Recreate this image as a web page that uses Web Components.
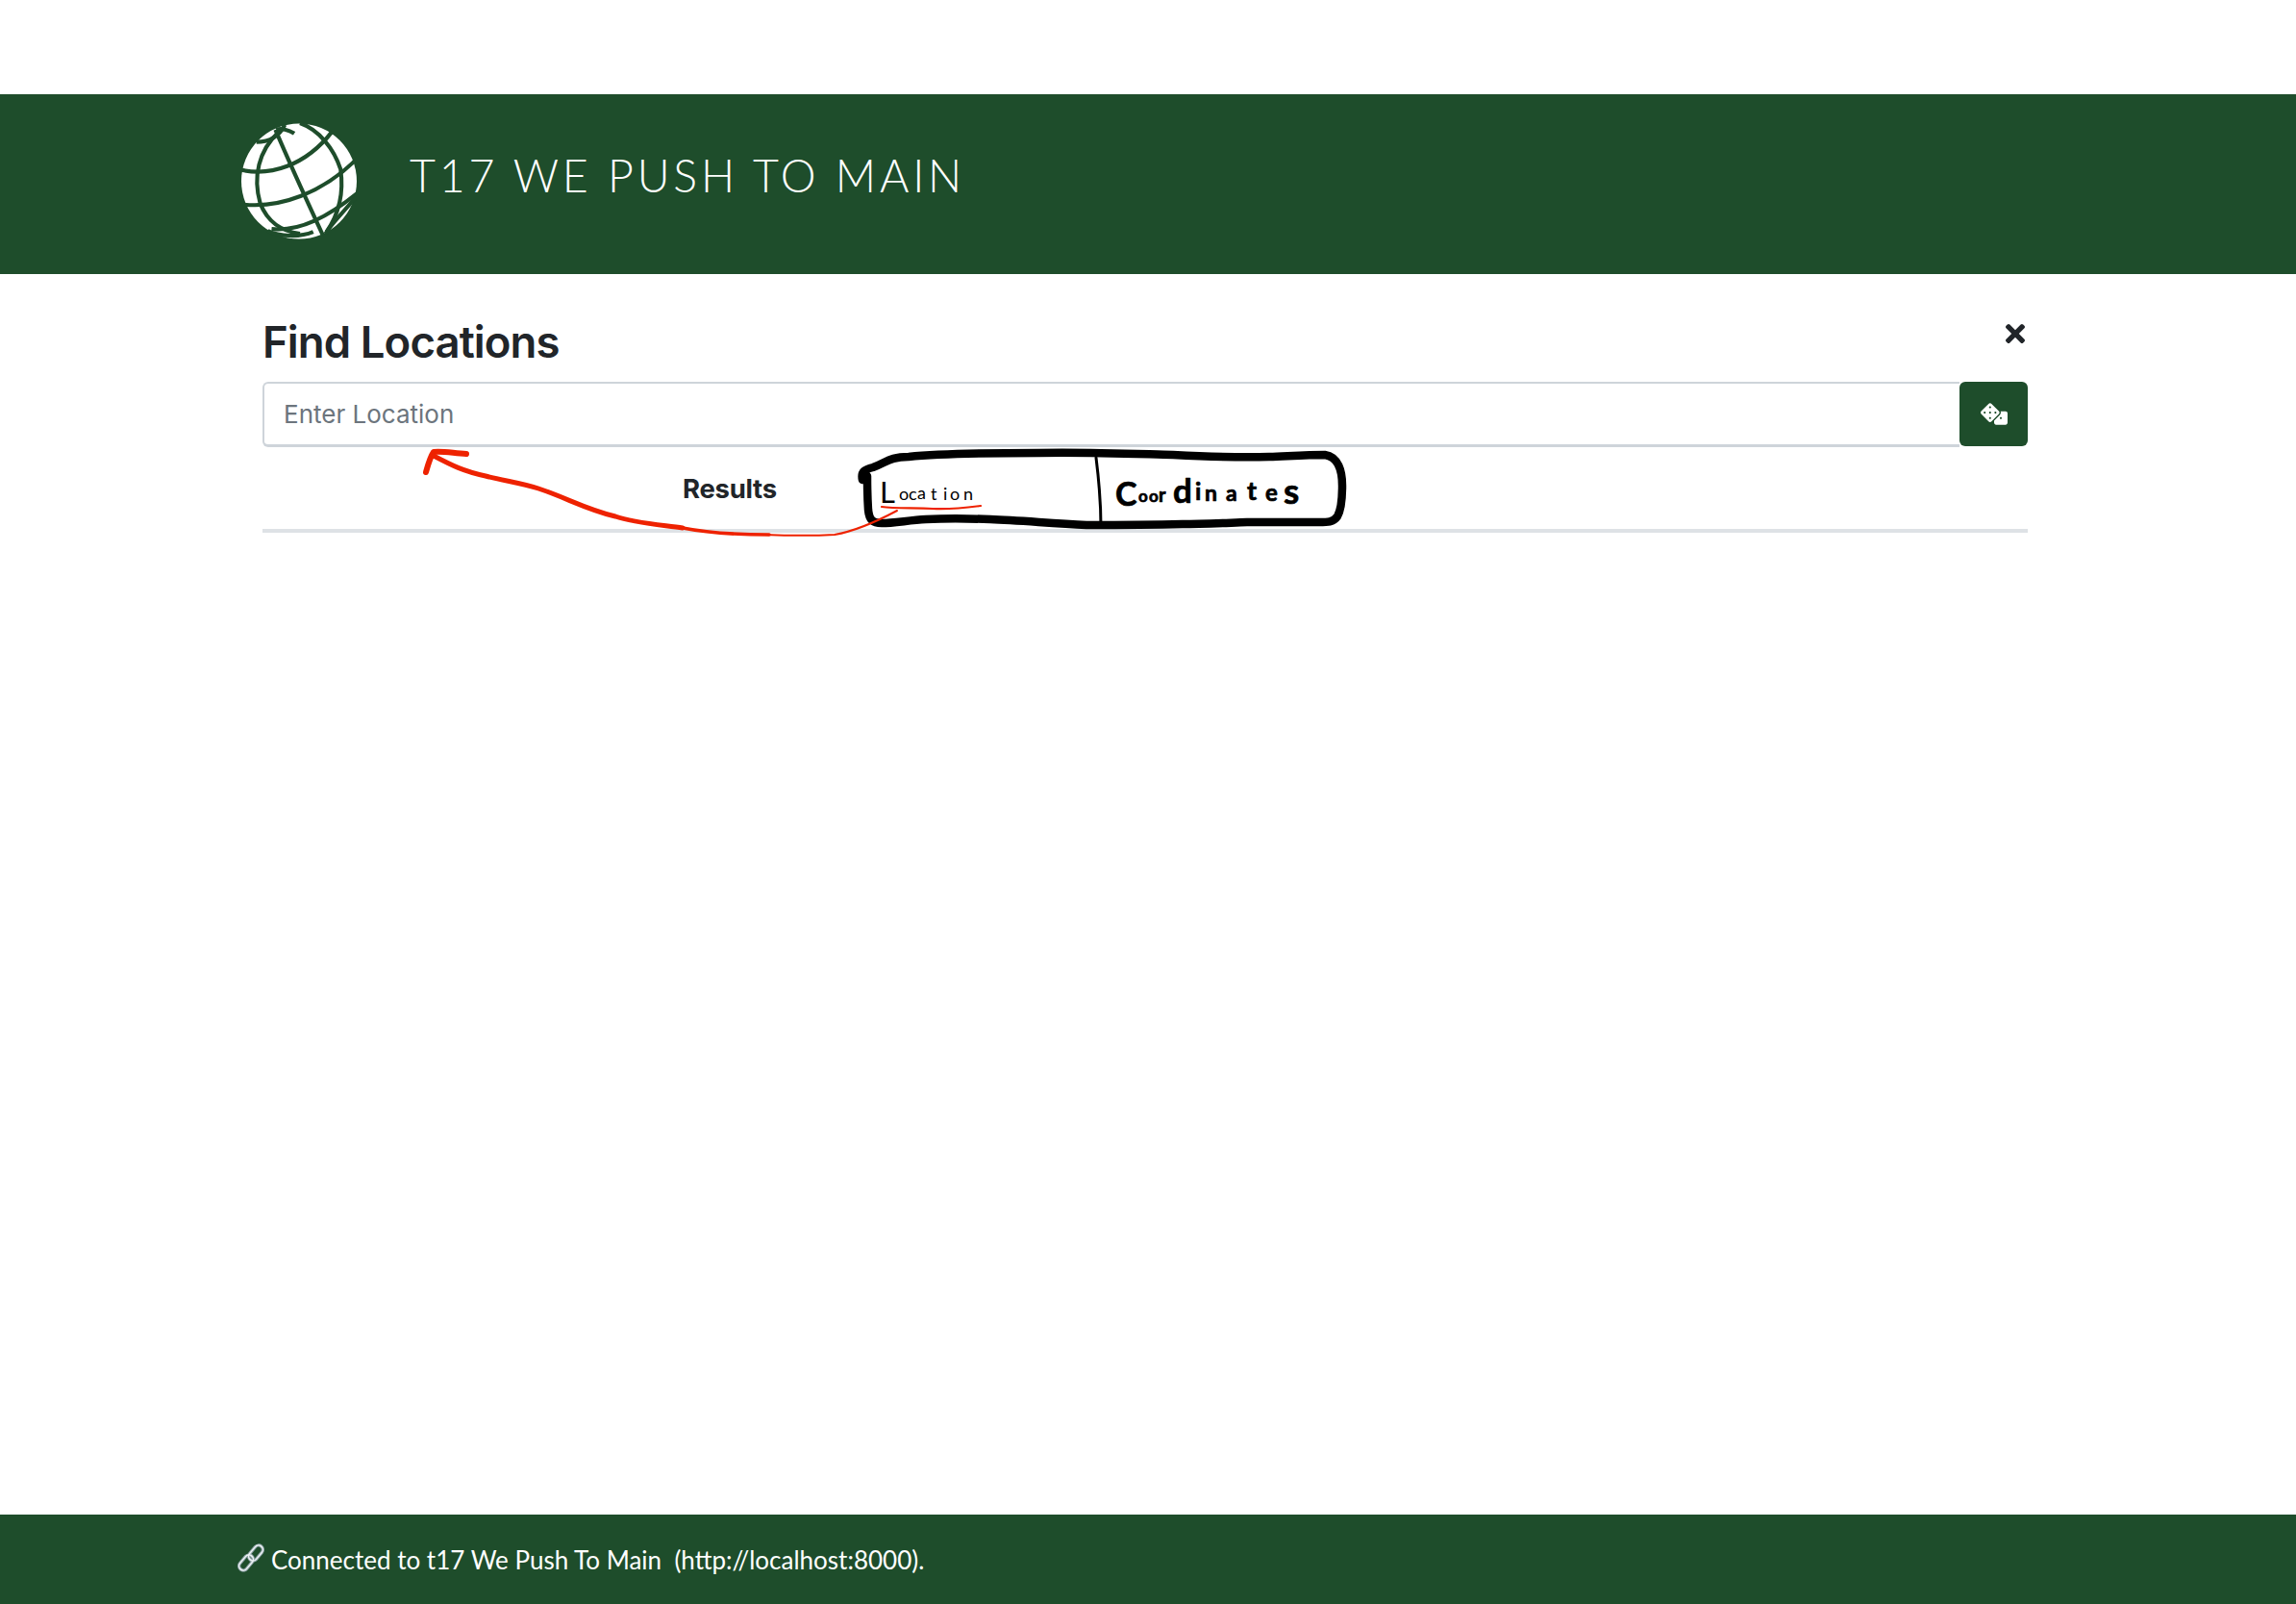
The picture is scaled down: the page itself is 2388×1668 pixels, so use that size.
<!DOCTYPE html>
<html lang="en">
<head>
<meta charset="utf-8">
<title>Find Locations</title>
<style>
  html, body { margin: 0; height: 100%; background: #fff; }
</style>
</head>
<body>
<app-shell>
  <app-header slot="header">T17 WE PUSH TO MAIN</app-header>
  <find-locations slot="main"></find-locations>
  <app-footer slot="footer">Connected to t17 We Push To Main&nbsp; (http://localhost:8000).</app-footer>
  <hand-sketch slot="sketch"></hand-sketch>
</app-shell>

<script>
// Custom Html Elements for the find locations page

const GREEN = "#1e4d2b";

class AppShell extends HTMLElement {
  constructor() {
    super();
    this.attachShadow({ mode: "open" });
    this.shadowRoot.innerHTML = `
      <style>
        :host {
          display: flex;
          flex-direction: column;
          position: relative;
          height: 1668px;
          padding-top: 98px;
          box-sizing: border-box;
          overflow: hidden;
        }
        #main { flex: 1; }
      </style>
      <slot name="header"></slot>
      <div id="main"><slot name="main"></slot></div>
      <slot name="footer"></slot>
      <slot name="sketch"></slot>
    `;
  }
}

class AppHeader extends HTMLElement {
  constructor() {
    super();
    this.attachShadow({ mode: "open" });
    this.shadowRoot.innerHTML = `
      <style>
        :host {
          display: flex;
          align-items: flex-start;
          height: 187px;
          padding: 28px 0 0 251px;
          box-sizing: border-box;
          background: ${GREEN};
          color: #fff;
        }
        svg { width: 120px; height: 125px; flex: none; }
        h1 {
          margin: 26px 0 0 55px;
          font: 300 46.5px/1.3 Lato, "Liberation Sans", sans-serif;
          letter-spacing: 0.082em;
          white-space: nowrap;
        }
      </style>
      <svg viewBox="10 11 122 127">
        <circle cx="71" cy="74.5" r="61" fill="#fff"/>
        <g fill="none" stroke="${GREEN}" stroke-width="4.2">
          <path d="M46 20Q63 60 96 131"/>
          <path d="M50 22C28 42 22 70 30 98C38 118 52 127 72 130"/>
          <path d="M72 13C92 20 108 40 115 62C118 84 114 108 100 128"/>
          <path d="M8 62C40 70 78 58 106 22"/>
          <path d="M12 99C50 103 96 88 135 48"/>
          <path d="M42 125C72 128 102 112 134 86"/>
          <path d="M26 33C38 33 50 28 56 15"/>
          <path d="M47 20C52 18 60 20 66 24"/>
          <path d="M99 130C106 118 114 112 132 90"/>
          <path d="M38 127C50 133 72 134 86 128"/>
        </g>
      </svg>
      <h1><slot></slot></h1>
    `;
  }
}

class SearchBox extends HTMLElement {
  constructor() {
    super();
    this.attachShadow({ mode: "open" });
    this.shadowRoot.innerHTML = `
      <style>
        :host { display: flex; height: 69px; }
        input {
          flex: 1;
          min-width: 0;
          box-sizing: border-box;
          height: 68px;
          padding: 0 20px;
          border: 2px solid #ced4da;
          border-bottom-width: 3px;
          border-right: 0;
          border-radius: 6px 0 0 6px;
          outline: 0;
          font: 400 26px Inter, "Liberation Sans", sans-serif;
          color: #212529;
        }
        input::placeholder { color: #6c757d; opacity: 1; }
        button {
          width: 71px;
          height: 67px;
          padding: 0;
          border: 0;
          border-radius: 6px;
          background: ${GREEN};
          display: flex;
          align-items: center;
          justify-content: center;
        }
        svg { width: 28px; height: 23px; fill: #fff; }
      </style>
      <input type="text" placeholder="Enter Location">
      <button type="button" aria-label="Random location">
        <svg viewBox="0 0 640 512"><path d="M592 192H473.26c12.69 29.59 7.12 65.2-17 89.32L320 417.58V464c0 26.51 21.49 48 48 48h224c26.51 0 48-21.49 48-48V240c0-26.51-21.49-48-48-48zM480 376c-13.25 0-24-10.75-24-24 0-13.26 10.75-24 24-24s24 10.74 24 24c0 13.25-10.75 24-24 24zm-46.37-186.7L258.7 14.37c-19.16-19.16-50.23-19.16-69.39 0L14.37 189.3c-19.16 19.16-19.16 50.23 0 69.39L189.3 433.63c19.16 19.16 50.23 19.16 69.39 0L433.63 258.7c19.16-19.17 19.16-50.24 0-69.4zM96 248c-13.25 0-24-10.75-24-24 0-13.26 10.75-24 24-24s24 10.74 24 24c0 13.25-10.75 24-24 24zm128 128c-13.25 0-24-10.75-24-24 0-13.26 10.75-24 24-24s24 10.74 24 24c0 13.25-10.75 24-24 24zm0-128c-13.25 0-24-10.75-24-24 0-13.26 10.75-24 24-24s24 10.74 24 24c0 13.25-10.75 24-24 24zm0-128c-13.25 0-24-10.75-24-24 0-13.26 10.75-24 24-24s24 10.74 24 24c0 13.25-10.75 24-24 24zm128 128c-13.25 0-24-10.75-24-24 0-13.26 10.75-24 24-24s24 10.74 24 24c0 13.25-10.75 24-24 24z"/></svg>
      </button>
    `;
  }
}

class FindLocations extends HTMLElement {
  constructor() {
    super();
    this.attachShadow({ mode: "open" });
    this.shadowRoot.innerHTML = `
      <style>
        :host {
          display: block;
          margin: 0 279px 0 273px;
          color: #212529;
          font-family: Inter, "Liberation Sans", sans-serif;
        }
        #title-row {
          display: flex;
          justify-content: space-between;
          align-items: flex-start;
          height: 112px;
          padding-top: 41px;
          box-sizing: border-box;
        }
        h2 {
          margin: 0;
          font-size: 45.5px;
          font-weight: 600;
          line-height: 60px;
          letter-spacing: -0.02em;
        }
        #close {
          width: 20px;
          height: 20px;
          margin: 11px 3px 0 0;
          fill: #212529;
        }
        #tabs {
          display: flex;
          align-items: center;
          height: 88px;
          padding: 0 0 0 437px;
          border-bottom: 4px solid #dee2e6;
          box-sizing: border-box;
          font-size: 27.5px;
          font-weight: 700;
          letter-spacing: -0.01em;
        }
      </style>
      <div id="title-row">
        <h2>Find Locations</h2>
        <svg id="close" viewBox="0 80 352 352"><path d="M242.72 256l100.07-100.07c12.28-12.28 12.28-32.19 0-44.48l-22.24-22.24c-12.28-12.28-32.19-12.28-44.48 0L176 189.28 75.93 89.21c-12.28-12.28-32.19-12.28-44.48 0L9.21 111.45c-12.28 12.28-12.28 32.19 0 44.48L109.28 256 9.21 356.07c-12.28 12.28-12.28 32.19 0 44.48l22.24 22.24c12.28 12.28 32.2 12.28 44.48 0L176 322.72l100.07 100.07c12.28 12.28 32.2 12.28 44.48 0l22.24-22.24c12.28-12.28 12.28-32.19 0-44.48L242.72 256z"/></svg>
      </div>
      <search-box></search-box>
      <div id="tabs">Results</div>
    `;
  }
}

class AppFooter extends HTMLElement {
  constructor() {
    super();
    this.attachShadow({ mode: "open" });
    this.shadowRoot.innerHTML = `
      <style>
        :host {
          display: flex;
          align-items: center;
          gap: 6px;
          height: 93px;
          padding-left: 246px;
          box-sizing: border-box;
          background: ${GREEN};
          color: #fff;
          font: 400 26px Lato, "Liberation Sans", sans-serif;
          white-space: nowrap;
        }
        svg { width: 30px; height: 30px; flex: none; margin-top: -3px; }
      </style>
      <svg viewBox="0 0 30 30" fill="none" stroke-linecap="round">
        <g stroke="#8fa3a8" stroke-width="3.4">
          <rect x="-4.5" y="-9" width="9" height="18" rx="4.5" transform="translate(10 20) rotate(40)"/>
          <rect x="-4.5" y="-9" width="9" height="18" rx="4.5" transform="translate(20 10) rotate(40)"/>
        </g>
        <g stroke="#eef3f4" stroke-width="1.4">
          <rect x="-4.5" y="-9" width="9" height="18" rx="4.5" transform="translate(10 20) rotate(40)"/>
          <rect x="-4.5" y="-9" width="9" height="18" rx="4.5" transform="translate(20 10) rotate(40)"/>
        </g>
      </svg>
      <span><slot></slot></span>
    `;
  }
}

// marker annotation drawn over the page, coordinates are page pixels
class HandSketch extends HTMLElement {
  constructor() {
    super();
    this.attachShadow({ mode: "open" });
    this.shadowRoot.innerHTML = `
      <style>
        :host { position: absolute; inset: 0; pointer-events: none; }
        svg { display: block; width: 100%; height: 100%; }
        text { fill: #000; font-family: Lato, "Liberation Sans", sans-serif; }
        #coords { stroke: #000; stroke-width: 0.7; }
      </style>
      <svg viewBox="0 0 2388 1668" fill="none" stroke-linecap="round" stroke-linejoin="round">
        <path stroke="#000" stroke-width="8.5" d="M897 499C895 490 900 488 908 486C922 481 925 475 945 475C985 471 1040 471 1080 471C1130 470 1180 472 1220 473C1260 475 1290 476 1320 475C1345 474 1360 473 1378 473C1392 475 1396 490 1396 505C1396 520 1395 530 1391 537C1386 544 1380 543 1365 543C1340 543 1320 543 1297 543C1270 544 1250 545 1230 545C1190 546 1150 546 1130 546C1090 544 1060 541 1030 540C1000 539 985 539 963 540C945 541 930 544 917 544C908 544 904 541 903 530C902 515 902 505 902 495"/>
        <path stroke="#000" stroke-width="3" d="M1140 476C1143 500 1145 525 1145 548"/>
        <path stroke="#ee2200" stroke-width="6" d="M485 472C470 471 460 469 451 470C447 476 445 484 443 491"/>
        <path stroke="#ee2200" stroke-width="5" d="M451 474C470 484 482 490 505 495C525 500 545 503 560 508C590 518 610 530 640 537C660 544 690 546 710 549"/>
        <path stroke="#ee2200" stroke-width="3.6" d="M710 549C740 555 770 556 800 556"/>
        <path stroke="#ee2200" stroke-width="2" d="M795 556C820 557 850 557 868 556C885 553 905 546 933 531"/>
        <path stroke="#ee2200" stroke-width="2.2" d="M917 527C930 529 950 528 970 529C990 530 1005 528 1020 526"/>
        <text font-size="18"
          x="915 935 945 954 968 981 988 1002"
          y="523 520 520 519 520 520 520 520"><tspan font-size="31">L</tspan>ocation</text>
        <text id="coords" font-weight="700" font-size="20"
          x="1160 1184 1195 1205 1220 1243 1253 1275 1297 1316 1335"
          y="526 522 522 522 523 520 521 521 520 521 524"><tspan font-size="34">C</tspan><tspan font-size="17">oo</tspan>r<tspan font-size="35">d</tspan><tspan font-size="25">i</tspan><tspan font-size="23">na</tspan><tspan font-size="27">t</tspan><tspan font-size="24">e</tspan><tspan font-size="37">s</tspan></text>
      </svg>
    `;
  }
}

customElements.define("app-shell", AppShell);
customElements.define("app-header", AppHeader);
customElements.define("search-box", SearchBox);
customElements.define("find-locations", FindLocations);
customElements.define("app-footer", AppFooter);
customElements.define("hand-sketch", HandSketch);
</script>
</body>
</html>
